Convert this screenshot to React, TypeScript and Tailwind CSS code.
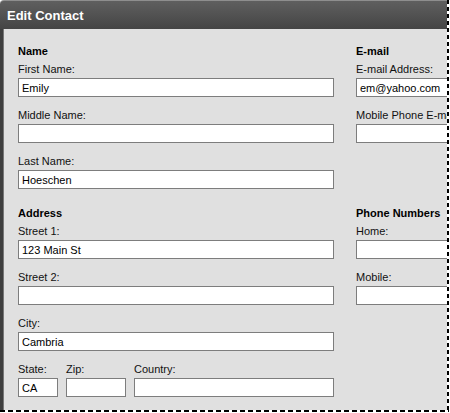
import React from 'react';

type FieldProps = { label: string; value?: string; className?: string };

function Field({ label, value = '', className = '' }: FieldProps) {
  return (
    <div className={`flex flex-col ${className}`}>
      <label className="h-[13px] leading-[13px] text-[11px] text-[#111] whitespace-nowrap">{label}</label>
      <input
        readOnly
        defaultValue={value}
        className="mt-[2px] h-[19px] w-full border border-[#7d7d7d] bg-white px-[3px] text-[11px] leading-[17px] text-black outline-none"
      />
    </div>
  );
}

function Header({ children }: { children: React.ReactNode }) {
  return <div className="mb-[5px] h-[13px] leading-[13px] text-[11px] font-bold text-black whitespace-nowrap">{children}</div>;
}

export default function App() {
  return (
    <div
      className="flex h-[413px] w-[450px] flex-col overflow-hidden bg-white"
      style={{ fontFamily: '"Liberation Sans", Arial, sans-serif' }}
    >
      <div className="flex h-[410px] shrink-0">
        {/* window */}
        <div className="flex w-[447px] shrink-0 flex-col">
          {/* title bar */}
          <div className="flex h-[29px] shrink-0 items-center rounded-tl-[4px] border-t border-[#8e8e8e] bg-linear-to-b from-[#5f5f5f] via-[#525252] to-[#444444] pl-[7px]">
            <span className="text-[13px] font-bold leading-none text-white">Edit Contact</span>
          </div>

          {/* body */}
          <div className="flex min-h-0 flex-1">
            <div className="w-[3px] shrink-0 bg-[#3e3e3e]" />
            <div className="w-[1px] shrink-0 bg-[#777777]" />
            <div className="min-w-0 flex-1 overflow-hidden bg-[#e0e0e0] pl-[14px] pt-[16px]">
              {/* Name / E-mail */}
              <div className="flex items-start gap-[22px]">
                <div className="flex w-[316px] shrink-0 flex-col gap-[12px]">
                  <div>
                    <Header>Name</Header>
                    <Field label="First Name:" value="Emily" />
                  </div>
                  <Field label="Middle Name:" />
                  <Field label="Last Name:" value="Hoeschen" />
                </div>
                <div className="flex w-[316px] shrink-0 flex-col gap-[12px]">
                  <div>
                    <Header>E-mail</Header>
                    <Field label="E-mail Address:" value="em@yahoo.com" />
                  </div>
                  <Field label="Mobile Phone E-mail:" />
                </div>
              </div>

              {/* Address / Phone Numbers */}
              <div className="mt-[18px] flex items-start gap-[22px]">
                <div className="flex w-[316px] shrink-0 flex-col gap-[12px]">
                  <div>
                    <Header>Address</Header>
                    <Field label="Street 1:" value="123 Main St" />
                  </div>
                  <Field label="Street 2:" />
                  <Field label="City:" value="Cambria" />
                  <div className="flex gap-[8px]">
                    <Field label="State:" value="CA" className="w-[40px]" />
                    <Field label="Zip:" className="w-[60px]" />
                    <Field label="Country:" className="w-[200px]" />
                  </div>
                </div>
                <div className="flex w-[316px] shrink-0 flex-col gap-[12px]">
                  <div>
                    <Header>Phone Numbers</Header>
                    <Field label="Home:" />
                  </div>
                  <Field label="Mobile:" />
                </div>
              </div>
            </div>
          </div>
        </div>

        {/* right dashed edge */}
        <div className="w-[2px] shrink-0 bg-[repeating-linear-gradient(to_bottom,#000_0px,#000_4px,transparent_4px,transparent_7px)]" />
        <div className="w-[1px] shrink-0" />
      </div>

      {/* bottom dashed edge */}
      <div className="h-[2px] w-[449px] shrink-0 bg-[repeating-linear-gradient(to_right,#000_0px,#000_5px,transparent_5px,transparent_8px)]" />
    </div>
  );
}
